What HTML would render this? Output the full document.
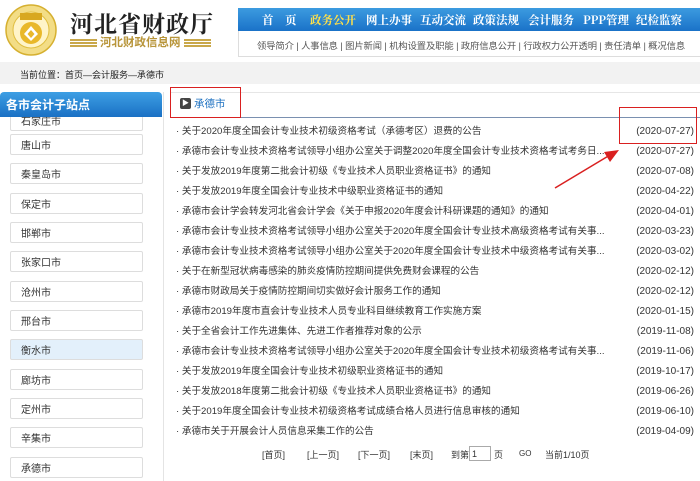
<!DOCTYPE html>
<html><head><meta charset="utf-8"><style>
*{margin:0;padding:0;box-sizing:border-box}
body{width:700px;height:481px;overflow:hidden;background:#fff;font-family:"Liberation Sans","Noto Sans CJK SC",sans-serif;position:relative;color:#333}
.a{position:absolute}
.nav{left:238px;top:8px;width:462px;height:23px;background:linear-gradient(#3c9be0,#1a72c8);color:#fff;font-family:"Noto Serif CJK SC",serif;font-weight:bold;font-size:11.5px;white-space:nowrap}
.nav span{position:absolute;top:4px}
.sub{left:238px;top:31px;width:462px;height:26px;border-left:1px solid #ddd;border-bottom:1px solid #ddd;font-size:9.3px;color:#555;white-space:nowrap;padding:7px 0 0 18px;letter-spacing:-0.1px;overflow:hidden}
.crumb{left:0;top:62px;width:700px;height:22px;background:#f2f2f2;font-size:9px;padding:6px 0 0 20px;color:#222}
.sh{left:0;top:92px;width:162px;height:25px;background:linear-gradient(#3d9fe4,#1a70c4);color:#fff;font-weight:bold;font-size:12px;padding:4px 0 0 6px;border-radius:4px 4px 0 0}
.it{position:absolute;left:10px;width:133px;height:21px;border:1px solid #ddd;border-radius:2px;font-size:10px;line-height:12px;padding:6px 0 0 10px;background:#fff;color:#333}
.list div{position:absolute;left:176px;width:520px;height:14px;line-height:14px;font-size:9.6px;white-space:nowrap;color:#333}
.list div b{font-weight:normal;position:absolute;right:2px;top:0;font-size:10px;line-height:14px}
</style></head><body>
<svg class="a" style="left:4px;top:4px" width="54" height="52" viewBox="0 0 54 52">
<circle cx="27" cy="26" r="25" fill="#f3dd86" stroke="#d6b030" stroke-width="1.5"/>
<circle cx="27" cy="26" r="18" fill="#fff4c8" stroke="#e0be40"/>
<rect x="16" y="9" width="22" height="7" fill="#d8a820"/>
<circle cx="27" cy="29" r="11" fill="#e9b82a"/>
<path d="M20 30 L27 22 L34 30 L27 37 Z" fill="#fff"/>
<path d="M23.5 30 L27 26 L30.5 30 L27 34 Z" fill="#e9b82a"/>
</svg>
<div class="a" style="left:70px;top:6px;font-size:23px;font-weight:bold;font-family:'Noto Serif CJK SC',serif;color:#222;letter-spacing:1px">河北省财政厅</div>
<div class="a" style="left:70px;top:39px;width:27px;height:9px;background:repeating-linear-gradient(#c9a84a 0 2px,#fff 2px 3px)"></div>
<div class="a" style="left:184px;top:39px;width:27px;height:9px;background:repeating-linear-gradient(#c9a84a 0 2px,#fff 2px 3px)"></div>
<div class="a" style="left:100px;top:36px;font-size:11.5px;line-height:14px;font-weight:bold;color:#b8953a">河北财政信息网</div>
<div class="a nav"><span style="left:24px">首　页</span><span style="left:72px;color:#ffe04a">政务公开</span><span style="left:128px">网上办事</span><span style="left:182px">互动交流</span><span style="left:235px">政策法规</span><span style="left:290px">会计服务</span><span style="left:345px">PPP管理</span><span style="left:398px">纪检监察</span></div>
<div class="a sub">领导简介 | 人事信息 | 图片新闻 | 机构设置及职能 | 政府信息公开 | 行政权力公开透明 | 责任清单 | 概况信息</div>
<div class="a crumb">当前位置：首页—会计服务—承德市</div>
<div class="a" style="left:163px;top:92px;width:1px;height:389px;background:#e4e4e4"></div>
<div class="it" style="top:110px">石家庄市</div>
<div class="a sh">各市会计子站点</div>
<div class="it" style="top:134px">唐山市</div>
<div class="it" style="top:163px">秦皇岛市</div>
<div class="it" style="top:193px">保定市</div>
<div class="it" style="top:222px">邯郸市</div>
<div class="it" style="top:251px">张家口市</div>
<div class="it" style="top:281px">沧州市</div>
<div class="it" style="top:310px">邢台市</div>
<div class="it" style="top:339px;background:#e3f0fb">衡水市</div>
<div class="it" style="top:369px">廊坊市</div>
<div class="it" style="top:398px">定州市</div>
<div class="it" style="top:427px">辛集市</div>
<div class="it" style="top:457px">承德市</div>
<div class="a" style="left:170px;top:92px;width:530px;height:1px;background:#e6e6e6"></div>
<div class="a" style="left:180px;top:98px;width:11px;height:11px;background:#444;border-radius:2px;color:#fff;font-size:7px;line-height:11px;text-align:center">▶</div>
<div class="a" style="left:194px;top:96px;font-size:10.5px;color:#1a6fc0">承德市</div>
<div class="a" style="left:175px;top:117px;width:525px;height:1px;background:#7a90b0"></div>
<div class="list">
<div style="top:125px">· 关于2020年度全国会计专业技术初级资格考试（承德考区）退费的公告<b>(2020-07-27)</b></div>
<div style="top:145px">· 承德市会计专业技术资格考试领导小组办公室关于调整2020年度全国会计专业技术资格考试考务日...<b>(2020-07-27)</b></div>
<div style="top:165px">· 关于发放2019年度第二批会计初级《专业技术人员职业资格证书》的通知<b>(2020-07-08)</b></div>
<div style="top:185px">· 关于发放2019年度全国会计专业技术中级职业资格证书的通知<b>(2020-04-22)</b></div>
<div style="top:205px">· 承德市会计学会转发河北省会计学会《关于申报2020年度会计科研课题的通知》的通知<b>(2020-04-01)</b></div>
<div style="top:225px">· 承德市会计专业技术资格考试领导小组办公室关于2020年度全国会计专业技术高级资格考试有关事...<b>(2020-03-23)</b></div>
<div style="top:245px">· 承德市会计专业技术资格考试领导小组办公室关于2020年度全国会计专业技术中级资格考试有关事...<b>(2020-03-02)</b></div>
<div style="top:265px">· 关于在新型冠状病毒感染的肺炎疫情防控期间提供免费财会课程的公告<b>(2020-02-12)</b></div>
<div style="top:285px">· 承德市财政局关于疫情防控期间切实做好会计服务工作的通知<b>(2020-02-12)</b></div>
<div style="top:305px">· 承德市2019年度市直会计专业技术人员专业科目继续教育工作实施方案<b>(2020-01-15)</b></div>
<div style="top:325px">· 关于全省会计工作先进集体、先进工作者推荐对象的公示<b>(2019-11-08)</b></div>
<div style="top:345px">· 承德市会计专业技术资格考试领导小组办公室关于2020年度全国会计专业技术初级资格考试有关事...<b>(2019-11-06)</b></div>
<div style="top:365px">· 关于发放2019年度全国会计专业技术初级职业资格证书的通知<b>(2019-10-17)</b></div>
<div style="top:385px">· 关于发放2018年度第二批会计初级《专业技术人员职业资格证书》的通知<b>(2019-06-26)</b></div>
<div style="top:405px">· 关于2019年度全国会计专业技术初级资格考试成绩合格人员进行信息审核的通知<b>(2019-06-10)</b></div>
<div style="top:425px">· 承德市关于开展会计人员信息采集工作的公告<b>(2019-04-09)</b></div>
</div>
<div class="a" style="left:262px;top:448px;font-size:9px">[首页]</div>
<div class="a" style="left:307px;top:448px;font-size:9px">[上一页]</div>
<div class="a" style="left:358px;top:448px;font-size:9px">[下一页]</div>
<div class="a" style="left:410px;top:448px;font-size:9px">[末页]</div>
<div class="a" style="left:451px;top:448px;font-size:9px">到第</div>
<div class="a" style="left:469px;top:446px;width:22px;height:15px;border:1px solid #aaa;font-size:9px;padding:2px 0 0 2px">1</div>
<div class="a" style="left:494px;top:448px;font-size:9px">页</div>
<div class="a" style="left:519px;top:449px;font-size:8px">GO</div>
<div class="a" style="left:545px;top:448px;font-size:9px">当前1/10页</div>
<div class="a" style="left:170px;top:87px;width:71px;height:31px;border:1.5px solid #d92020"></div>
<div class="a" style="left:619px;top:107px;width:78px;height:37px;border:1.5px solid #d92020"></div>
<svg class="a" style="left:0;top:0" width="700" height="481"><line x1="555" y1="188" x2="610" y2="155" stroke="#d92020" stroke-width="1.5"/><polygon points="619,150 604,152 610,162" fill="#d92020"/></svg>
</body></html>
